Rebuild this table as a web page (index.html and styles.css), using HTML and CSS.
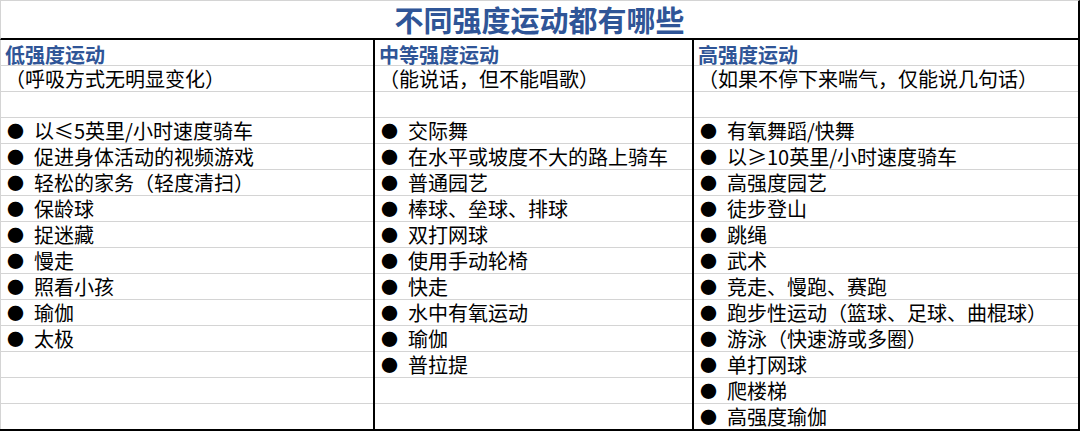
FILE: index.html
```html
<!DOCTYPE html>
<html lang="zh-CN">
<head>
<meta charset="utf-8">
<title>不同强度运动都有哪些</title>
<link rel="stylesheet" href="styles.css">
</head>
<body>
<div class="sheet">
  <div class="title">不同强度运动都有哪些</div>
  <div class="table">
    <div class="col col-1">
      <div class="row head">低强度运动</div>
      <div class="row sub">（呼吸方式无明显变化）</div>
      <div class="row"></div>
      <div class="row item"><span class="dot">●</span>以≤5英里/小时速度骑车</div>
      <div class="row item"><span class="dot">●</span>促进身体活动的视频游戏</div>
      <div class="row item"><span class="dot">●</span>轻松的家务（轻度清扫）</div>
      <div class="row item"><span class="dot">●</span>保龄球</div>
      <div class="row item"><span class="dot">●</span>捉迷藏</div>
      <div class="row item"><span class="dot">●</span>慢走</div>
      <div class="row item"><span class="dot">●</span>照看小孩</div>
      <div class="row item"><span class="dot">●</span>瑜伽</div>
      <div class="row item"><span class="dot">●</span>太极</div>
      <div class="row"></div>
      <div class="row"></div>
      <div class="row"></div>
    </div>
    <div class="col col-2">
      <div class="row head">中等强度运动</div>
      <div class="row sub">（能说话，但不能唱歌）</div>
      <div class="row"></div>
      <div class="row item"><span class="dot">●</span>交际舞</div>
      <div class="row item"><span class="dot">●</span>在水平或坡度不大的路上骑车</div>
      <div class="row item"><span class="dot">●</span>普通园艺</div>
      <div class="row item"><span class="dot">●</span>棒球、垒球、排球</div>
      <div class="row item"><span class="dot">●</span>双打网球</div>
      <div class="row item"><span class="dot">●</span>使用手动轮椅</div>
      <div class="row item"><span class="dot">●</span>快走</div>
      <div class="row item"><span class="dot">●</span>水中有氧运动</div>
      <div class="row item"><span class="dot">●</span>瑜伽</div>
      <div class="row item"><span class="dot">●</span>普拉提</div>
      <div class="row"></div>
      <div class="row"></div>
    </div>
    <div class="col col-3">
      <div class="row head">高强度运动</div>
      <div class="row sub">（如果不停下来喘气，仅能说几句话）</div>
      <div class="row"></div>
      <div class="row item"><span class="dot">●</span>有氧舞蹈/快舞</div>
      <div class="row item"><span class="dot">●</span>以≥10英里/小时速度骑车</div>
      <div class="row item"><span class="dot">●</span>高强度园艺</div>
      <div class="row item"><span class="dot">●</span>徒步登山</div>
      <div class="row item"><span class="dot">●</span>跳绳</div>
      <div class="row item"><span class="dot">●</span>武术</div>
      <div class="row item"><span class="dot">●</span>竞走、慢跑、赛跑</div>
      <div class="row item"><span class="dot">●</span>跑步性运动（篮球、足球、曲棍球）</div>
      <div class="row item"><span class="dot">●</span>游泳（快速游或多圈）</div>
      <div class="row item"><span class="dot">●</span>单打网球</div>
      <div class="row item"><span class="dot">●</span>爬楼梯</div>
      <div class="row item"><span class="dot">●</span>高强度瑜伽</div>
    </div>
  </div>
</div>
</body>
</html>
```
FILE: styles.css
```css
html, body {
  margin: 0;
  padding: 0;
  background: #ffffff;
}

body {
  font-family: "Noto Sans CJK SC", "Liberation Sans", sans-serif;
  color: #000000;
  width: 1080px;
  height: 431px;
  overflow: hidden;
}

.sheet {
  width: 1080px;
}

.title {
  box-sizing: border-box;
  height: 40px;
  border-top: 1px solid #d4d4d4;
  border-left: 1px solid #d4d4d4;
  border-right: 2px solid #000;
  border-bottom: 2px solid #000;
  color: #2f5597;
  font-size: 29px;
  font-weight: 700;
  line-height: 37px;
  text-align: center;
  white-space: nowrap;
}

.table {
  display: flex;
  border-bottom: 2px solid #000;
}

.col {
  display: flex;
  flex-direction: column;
  border-right: 2px solid #000;
}

.col-1 {
  width: 372px;
  border-left: 1px solid #d4d4d4;
}

.col-2 {
  width: 317px;
}

.col-3 {
  width: 384px;
}

.row {
  box-sizing: border-box;
  height: 26px;
  border-bottom: 1px solid #d4d4d4;
  font-size: 20px;
  line-height: 24px;
  padding: 1px 0 0 4px;
  white-space: nowrap;
  display: flex;
  align-items: center;
}

.row:last-child {
  height: 25px;
  border-bottom: none;
}

.head {
  color: #2f5597;
  font-weight: 700;
  padding-top: 4px;
  line-height: 21px;
}

.item {
  padding-left: 6px;
}

.dot {
  display: inline-block;
  width: 27px;
  font-size: 17px;
}
```
